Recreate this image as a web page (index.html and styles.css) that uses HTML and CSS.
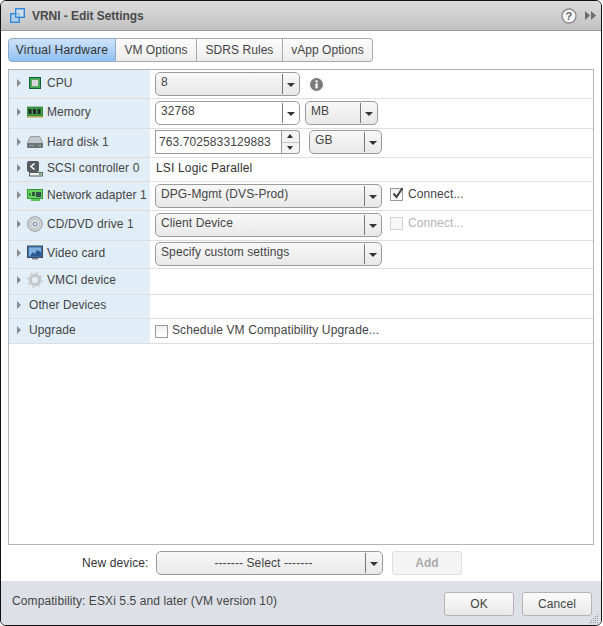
FILE: index.html
```html
<!DOCTYPE html>
<html lang="en">
<head>
<meta charset="utf-8">
<title>VRNI - Edit Settings</title>
<link rel="stylesheet" href="styles.css">
</head>
<body>
<div class="window">
  <header class="titlebar">
    <svg class="title-icon" width="15" height="15" viewBox="0 0 15 15"><rect x="5.5" y="4.5" width="5" height="5" fill="#fff"/><rect x=".7" y="5.7" width="8.6" height="8.6" fill="#a9d2f3" fill-opacity=".75" stroke="#2f87d8" stroke-width="1.4"/><rect x="5.7" y=".7" width="8.6" height="8.6" fill="#cfe5f8" fill-opacity=".6" stroke="#2f87d8" stroke-width="1.4"/></svg>
    <span class="title">VRNI - Edit Settings</span>
    <svg class="help" width="16" height="16" viewBox="0 0 16 16"><circle cx="8" cy="8" r="7" fill="#f7f7f7" stroke="#8b8b8b" stroke-width="1.4"/><text x="8" y="12" text-anchor="middle" class="help-q">?</text></svg>
    <svg class="expand" width="11" height="9" viewBox="0 0 11 9"><path d="M0 0l5 4.5L0 9zM6 0l5 4.5L6 9z" fill="#6d6d6d"/></svg>
  </header>

  <nav class="tabs">
    <span class="tab tab-active">Virtual Hardware</span>
    <span class="tab tab-vm">VM Options</span>
    <span class="tab tab-sdrs">SDRS Rules</span>
    <span class="tab tab-last">vApp Options</span>
  </nav>

  <section class="panel">
    <div class="row h29">
      <div class="label"><i class="caret"></i>
        <svg class="icon" width="16" height="16" viewBox="0 0 16 16"><rect x="2.5" y="2.5" width="11" height="11" fill="#2fae4a" stroke="#14602c"/><rect x="4.5" y="4.5" width="7" height="7" fill="#d5d8d5" stroke="#6f9a76"/></svg>
        <span>CPU</span></div>
      <div class="value">
        <div class="combo w145"><span class="combo-text">8</span><span class="combo-arrow"></span></div>
        <svg class="info" width="13" height="13" viewBox="0 0 13 13"><circle cx="6.5" cy="6.5" r="6.5" fill="#7b7b7b"/><rect x="5.4" y="5.4" width="2.3" height="5" fill="#fff"/><rect x="5.4" y="2.4" width="2.3" height="2" fill="#fff"/></svg>
      </div>
    </div>

    <div class="row h30">
      <div class="label"><i class="caret"></i>
        <svg class="icon" width="16" height="16" viewBox="0 0 16 16"><rect x="0" y="3" width="16" height="9" fill="#3f9d45" stroke="#1f6b2c" stroke-width=".6"/><rect x="1.5" y="5" width="3" height="5" fill="#23282a"/><rect x="6" y="5" width="3" height="5" fill="#23282a"/><rect x="10.5" y="5" width="3" height="5" fill="#23282a"/><rect x="0" y="12" width="16" height="1.5" fill="#b5a544"/></svg>
        <span>Memory</span></div>
      <div class="value">
        <div class="combo combo-edit w145"><span class="combo-text">32768</span><span class="combo-arrow"></span></div>
        <div class="combo w73 gap"><span class="combo-text">MB</span><span class="combo-arrow"></span></div>
      </div>
    </div>

    <div class="row h29 tight">
      <div class="label"><i class="caret"></i>
        <svg class="icon" width="16" height="16" viewBox="0 0 16 16"><path d="M3.5 2.5h9l3 6v1H.5v-1z" fill="#c4c9ce" stroke="#8a9096" stroke-width=".8"/><rect x="0" y="9" width="16" height="5" rx="1" fill="#6c7277"/><rect x="2" y="11" width="5" height="1" fill="#969ba0"/><rect x="12" y="11" width="2" height="1.5" fill="#7fc47f"/></svg>
        <span>Hard disk 1</span></div>
      <div class="value">
        <div class="spinner"><span class="spin-text">763.7025833129883</span><span class="spin-btns"><span class="spin-up"></span><span class="spin-down"></span></span></div>
        <div class="combo w73 gap8"><span class="combo-text">GB</span><span class="combo-arrow"></span></div>
      </div>
    </div>

    <div class="row h24 pt1">
      <div class="label"><i class="caret"></i>
        <svg class="icon icon-scsi" width="16" height="16" viewBox="0 0 16 16"><rect x="0" y="0" width="12" height="11" rx="2" fill="#555b60"/><path d="M7.5 2.5L4 5.5l3.5 3" fill="none" stroke="#fff" stroke-width="1.6"/><rect x="2.5" y="11.5" width="13" height="3.5" fill="#eef0ee" stroke="#5b6063"/><rect x="12" y="12.5" width="2.5" height="1.5" fill="#3fa14a"/></svg>
        <span>SCSI controller 0</span></div>
      <div class="value"><span class="plain">LSI Logic Parallel</span></div>
    </div>

    <div class="row h29">
      <div class="label"><i class="caret"></i>
        <svg class="icon" width="16" height="16" viewBox="0 0 16 16"><rect x=".5" y="2.5" width="15" height="9" fill="#6bd25f" stroke="#2f9a3a"/><rect x="2" y="6" width="1.5" height="3" fill="#2a7a34"/><rect x="5" y="5" width="3" height="4" fill="#2c5a3c"/><rect x="9" y="5" width="5" height="5" fill="#33504a"/><rect x="4" y="12" width="9" height="2" fill="#5cc455"/></svg>
        <span>Network adapter 1</span></div>
      <div class="value">
        <div class="combo w227"><span class="combo-text">DPG-Mgmt (DVS-Prod)</span><span class="combo-arrow"></span></div>
        <span class="check check-on"><svg width="13" height="13" viewBox="0 0 13 13"><path d="M2.5 6.5l3 3.5L11.5 1" fill="none" stroke="#444" stroke-width="2"/></svg></span>
        <span class="connect">Connect...</span>
      </div>
    </div>

    <div class="row h30">
      <div class="label"><i class="caret"></i>
        <svg class="icon" width="16" height="16" viewBox="0 0 16 16"><circle cx="8" cy="8" r="7.3" fill="#d3d5d7" stroke="#8e9194" stroke-width=".9"/><circle cx="8" cy="8" r="4.5" fill="#e9ebec" stroke="#a4a7aa" stroke-width=".7"/><circle cx="8" cy="8" r="2.6" fill="#8da0b5"/><circle cx="8" cy="8" r="1" fill="#fff"/></svg>
        <span>CD/DVD drive 1</span></div>
      <div class="value">
        <div class="combo w227"><span class="combo-text">Client Device</span><span class="combo-arrow"></span></div>
        <span class="check check-off"></span>
        <span class="connect connect-off">Connect...</span>
      </div>
    </div>

    <div class="row h28 pt3 tight">
      <div class="label"><i class="caret"></i>
        <svg class="icon" width="16" height="16" viewBox="0 0 16 16"><rect x=".5" y="1" width="15" height="11.5" fill="#3a6fae" stroke="#3e4a57"/><rect x="2" y="2.5" width="12" height="8.5" fill="#7fb2e2"/><path d="M3 11l3-4 2 2 2-4 4 2v4z" fill="#2b5a92"/><rect x="5" y="13" width="6" height="1.5" fill="#7f858b"/></svg>
        <span>Video card</span></div>
      <div class="value">
        <div class="combo w227"><span class="combo-text">Specify custom settings</span><span class="combo-arrow"></span></div>
      </div>
    </div>

    <div class="row h26 pt2">
      <div class="label"><i class="caret"></i>
        <svg class="icon" width="16" height="16" viewBox="0 0 16 16"><circle cx="8" cy="8" r="4.6" fill="none" stroke="#c4c6c8" stroke-width="3"/><circle cx="8" cy="8" r="6.6" fill="none" stroke="#cfd1d3" stroke-width="2.6" stroke-dasharray="2.6 2.6"/></svg>
        <span>VMCI device</span></div>
      <div class="value"></div>
    </div>

    <div class="row h24 pt1">
      <div class="label"><i class="caret"></i><span>Other Devices</span></div>
      <div class="value"></div>
    </div>

    <div class="row h25 pt2">
      <div class="label"><i class="caret"></i><span>Upgrade</span></div>
      <div class="value">
        <span class="check check-plain"></span>
        <span class="schedule">Schedule VM Compatibility Upgrade...</span>
      </div>
    </div>
  </section>

  <div class="newdevice">
    <span class="newdevice-label">New device:</span>
    <div class="combo w227 combo-center"><span class="combo-text">------- Select -------</span><span class="combo-arrow"></span></div>
    <span class="btn btn-add">Add</span>
  </div>

  <footer class="footer">
    <span class="compat">Compatibility: ESXi 5.5 and later (VM version 10)</span>
    <span class="btn btn-foot">OK</span>
    <span class="btn btn-foot btn-cancel">Cancel</span>
    <svg class="grip" width="10" height="10" viewBox="0 0 10 10"><g fill="#8f9296"><rect x="8" y="0" width="1" height="1"/><rect x="6" y="2" width="1" height="1"/><rect x="8" y="2" width="1" height="1"/><rect x="4" y="4" width="1" height="1"/><rect x="6" y="4" width="1" height="1"/><rect x="8" y="4" width="1" height="1"/><rect x="2" y="6" width="1" height="1"/><rect x="4" y="6" width="1" height="1"/><rect x="6" y="6" width="1" height="1"/><rect x="8" y="6" width="1" height="1"/><rect x="0" y="8" width="1" height="1"/><rect x="2" y="8" width="1" height="1"/><rect x="4" y="8" width="1" height="1"/><rect x="6" y="8" width="1" height="1"/><rect x="8" y="8" width="1" height="1"/></g></svg>
  </footer>
</div>
</body>
</html>
```
FILE: styles.css
```css
* { box-sizing: border-box; }
html, body { margin: 0; padding: 0; background: #fff; }
body {
  width: 603px;
  height: 626px;
  overflow: hidden;
  font-family: "Liberation Sans", Arial, sans-serif;
  font-size: 12px;
  letter-spacing: .1px;
  color: #333;
}
.window {
  width: 602px;
  height: 626px;
  border: 1px solid #111;
  border-radius: 6px;
  overflow: hidden;
  background: #fff;
  display: flex;
  flex-direction: column;
}
.titlebar {
  height: 30px;
  flex: none;
  display: flex;
  align-items: center;
  padding: 0 5px 0 9px;
  background: linear-gradient(#dcdcdc, #c2c2c2);
  border-bottom: 1px solid #9a9a9a;
}
.title-icon { flex: none; margin-right: 7px; }
.title { font-size: 12px; font-weight: bold; letter-spacing: -.05px; color: #4a4a4a; flex: 1; }
.help { margin-right: 8px; }
.help-q { font-size: 11px; font-weight: bold; fill: #666; }

.tabs { display: flex; margin: 7px 0 0 7px; height: 24px; flex: none; }
.tab {
  width: 90px;
  height: 24px;
  text-align: center;
  line-height: 22px;
  letter-spacing: .05px;
  color: #444;
  background: linear-gradient(#fcfcfc, #ececec);
  border: 1px solid #a9a9a9;
  border-left: 0;
}
.tab-active {
  width: 108px;
  letter-spacing: .2px;
  border-left: 1px solid #8fa9c7;
  border-radius: 4px 0 0 4px;
  background: linear-gradient(#cfe3f8, #8fc0f2);
  border-color: #8fa9c7;
  color: #333;
}
.tab-vm { width: 81px; }
.tab-sdrs { width: 86px; }
.tab-last { border-radius: 0 4px 4px 0; }

.panel {
  margin: 7px 0 0 7px;
  width: 586px;
  height: 476px;
  flex: none;
  border: 1px solid #b4b4b4;
  display: flex;
  flex-direction: column;
}
.row {
  display: flex;
  flex: none;
  border-bottom: 1px solid #dedede;
}
.h24 { height: 24px; }
.h25 { height: 25px; }
.h26 { height: 26px; }
.h28 { height: 28px; }
.h29 { height: 29px; }
.h30 { height: 30px; }
.label {
  width: 141px;
  flex: none;
  display: flex;
  align-items: flex-start;
  line-height: 16px;
  padding: 5px 0 0 8px;
  background: #e2eef7;
  color: #444;
  white-space: nowrap;
}
.pt1 .label { padding-top: 2px; }
.pt2 .label { padding-top: 3px; }
.pt3 .label { padding-top: 4px; }
.caret {
  width: 0;
  height: 0;
  border-left: 4px solid #8a8a8a;
  border-top: 4px solid transparent;
  border-bottom: 4px solid transparent;
  margin: 4px 8px 0 0;
  flex: none;
}
.icon { flex: none; margin-right: 4px; margin-left: -2px; }
.icon-scsi { margin-top: 1px; }
.value {
  flex: 1;
  display: flex;
  align-items: flex-start;
  padding: 2px 0 0 5px;
  min-width: 0;
}
.tight .value { padding-top: 1px; }
.plain { color: #333; line-height: 14px; margin: 1px 0 0 1px; letter-spacing: .17px; }

.combo {
  height: 24px;
  display: flex;
  flex: none;
  border: 1px solid #9a9a9a;
  border-radius: 5px;
  background: linear-gradient(#f8f8f8, #e8e8e8);
  color: #444;
}
.combo-edit { background: #fff; }
.w145 { width: 145px; }
.w73 { width: 73px; }
.w227 { width: 227px; }
.gap { margin-left: 5px; }
.gap8 { margin-left: 9px; }
.combo-text { flex: 1; padding: 2px 0 0 5px; line-height: 14px; white-space: nowrap; }
.combo-center .combo-text { text-align: center; padding-top: 4px; }
.combo-arrow {
  width: 17px;
  flex: none;
  position: relative;
  border-left: 1px solid #777;
  margin: 1px 0;
}
.combo-arrow::after {
  content: "";
  position: absolute;
  left: 4px;
  top: 9px;
  border-top: 4px solid #333;
  border-left: 4px solid transparent;
  border-right: 4px solid transparent;
}
.info { margin: 6px 0 0 10px; flex: none; }

.spinner {
  width: 145px;
  height: 24px;
  flex: none;
  display: flex;
  align-items: stretch;
}
.spin-text {
  flex: 1;
  border: 1px solid #9a9a9a;
  line-height: 22px;
  padding-left: 3px;
  color: #444;
  background: #fff;
}
.spin-btns {
  width: 18px;
  display: flex;
  flex-direction: column;
  border: 1px solid #9a9a9a;
  border-left: 0;
  border-radius: 0 4px 4px 0;
  background: #f4f4f4;
}
.spin-up, .spin-down { flex: 1; position: relative; }
.spin-down { border-top: 1px solid #c4c4c4; }
.spin-up::after, .spin-down::after {
  content: "";
  position: absolute;
  left: 5px;
  top: 3px;
  border-left: 3.5px solid transparent;
  border-right: 3.5px solid transparent;
}
.spin-up::after { border-bottom: 4px solid #333; }
.spin-down::after { border-top: 4px solid #333; }

.check {
  width: 13px;
  height: 13px;
  flex: none;
  border: 1px solid #9a9a9a;
  background: linear-gradient(#f0f0f0, #fff);
  display: block;
  margin-top: 4px;
}
.check svg { display: block; margin: -2px 0 0 0; overflow: visible; }
.check-on { margin-left: 8px; }
.check-off { margin-left: 8px; border-color: #d4d4d4; background: #f7f7f7; }
.connect { margin: 3px 0 0 5px; color: #444; line-height: 14px; }
.connect-off { color: #b4b4b4; }
.schedule { margin: 2px 0 0 4px; color: #444; line-height: 14px; letter-spacing: .12px; }

.newdevice {
  height: 36px;
  flex: none;
  display: flex;
  align-items: center;
  padding-left: 81px;
  color: #333;
}
.newdevice-label { width: 74px; flex: none; }
.btn {
  height: 24px;
  line-height: 22px;
  text-align: center;
  border: 1px solid #b4b4b4;
  border-radius: 3px;
  background: linear-gradient(#fbfbfb, #e8e8e8);
  color: #444;
  flex: none;
}
.btn-add {
  width: 70px;
  margin-left: 9px;
  color: #aaa;
  font-weight: bold;
  border-color: #dedede;
  background: #f4f4f4;
}
.footer {
  flex: 1;
  display: flex;
  align-items: flex-start;
  position: relative;
  padding: 11px 9px 0 11px;
  background: #dde1e7;
}
.compat { flex: 1; color: #444; line-height: 14px; padding-top: 2px; }
.btn-foot { width: 70px; }
.btn-cancel { margin-left: 8px; }
.grip { position: absolute; right: 2px; bottom: 1px; }
```
